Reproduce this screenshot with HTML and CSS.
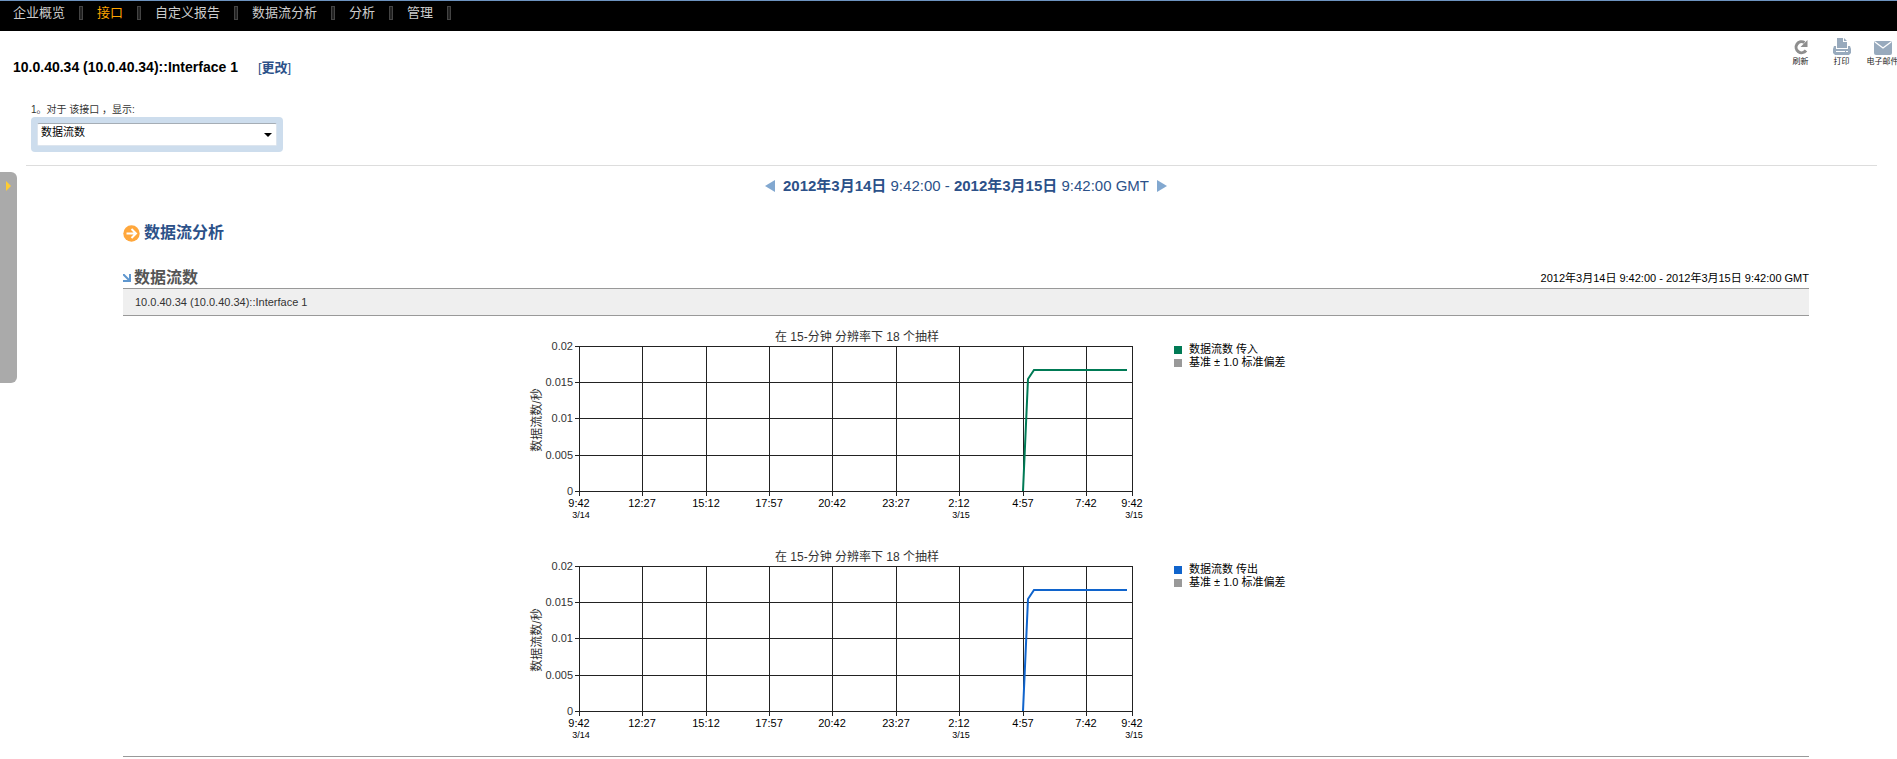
FILE: index.html
```html
<!DOCTYPE html>
<html lang="zh-CN">
<head>
    <meta charset="UTF-8">
    <meta name="viewport" content="width=device-width, initial-scale=1.0">
    <title>数据流分析</title>
    <link rel="stylesheet" href="styles.css">
</head>
<body>
    <nav class="menu">
        <a href="#">企业概览</a>
        <a href="#" class="active">接口</a>
        <a href="#">自定义报告</a>
        <a href="#">数据流分析</a>
        <a href="#">分析</a>
        <a href="#">管理</a>
    </nav>

    <header class="header">
        <div class="title">
            <h1>10.0.40.34 (10.0.40.34)::Interface 1</h1>
            <a href="#">[<b>更改</b>]</a>
        </div>
        <div class="tools">
            <button type="button">
                <svg width="18" height="18" viewBox="0 0 18 18">
                    <path d="M14 12.500A5.500 5.500 0 1 1 12.500 4.500" fill="none" stroke="#8e8e8e" stroke-width="3"/>
                    <path d="M15.500 2v7H8.500z" fill="#8e8e8e"/>
                </svg>
                <span>刷新</span>
            </button>
            <button type="button">
                <svg width="18" height="18" viewBox="0 0 18 18" fill="#98aabd">
                    <path d="M4 0h6v4h4v6H4z"/>
                    <path d="M11 0l3 3h-3z"/>
                    <path d="M1 8h2v3h12V8h2l1 3v4l-2 2H2l-2-2v-4z"/>
                    <path d="M3 13h9v1H3zM13 13h2v1h-2z" fill="#fff"/>
                </svg>
                <span>打印</span>
            </button>
            <button type="button">
                <svg width="18" height="18" viewBox="0 0 18 18">
                    <rect y="3" width="18" height="14" rx="2" fill="#98aabd"/>
                    <path d="M1 4l8 6 8-6" fill="none" stroke="#fff" stroke-width="1.300"/>
                </svg>
                <span>电子邮件</span>
            </button>
        </div>
    </header>

    <form class="filter">
        <label for="display">1。对于 该接口 ，显示:</label>
        <div class="select-box">
            <select id="display">
                <option>数据流数</option>
            </select>
        </div>
    </form>

    <button type="button" class="side-tab" aria-label="展开"></button>

    <main class="main">
        <div class="period">
            <button type="button" class="prev" aria-label="上一个"></button>
            <a href="#"><b>2012年3月14日</b> 9:42:00 - <b>2012年3月15日</b> 9:42:00 GMT</a>
            <button type="button" class="next" aria-label="下一个"></button>
        </div>

        <h2 class="section-title">
            <svg width="17" height="17" viewBox="0 0 17 17">
                <circle cx="8.500" cy="8.500" r="8.200" fill="#ffa73c"/>
                <path d="M3.500 8.500h9M8.500 4l4.500 4.500L8.500 13" fill="none" stroke="#fff" stroke-width="2"/>
            </svg>
            <a href="#">数据流分析</a>
        </h2>

        <section class="panel">
            <div class="panel-head">
                <h3>
                    <svg width="8" height="8" viewBox="0 0 8 8">
                        <path d="M0 0l6 6M7 0v7H0" fill="none" stroke="#5f97cf" stroke-width="2"/>
                    </svg>
                    数据流数
                </h3>
                <span>2012年3月14日 9:42:00 - 2012年3月15日 9:42:00 GMT</span>
            </div>
            <div class="panel-bar">10.0.40.34 (10.0.40.34)::Interface 1</div>

            <div class="charts">
                <div class="chart">
                    <svg class="plot" width="630" height="210" viewBox="0 0 630 210">
                        <text class="caption" x="337" y="15">在 15-分钟 分辨率下 18 个抽样</text>
                        <text class="caption" transform="translate(21 94) rotate(-90)">数据流数/秒</text>
                        <path id="grid" class="grid" d="M55 20.500H613M55 56.500H613M55 92.500H613M55 129.500H613M55 165.500H613M59.500 20V170M122.500 20V170M186.500 20V170M249.500 20V170M312.500 20V170M376.500 20V170M439.500 20V170M503.500 20V170M566.500 20V170M612.500 20V170"/>
                        <g class="y-labels">
                            <text x="53" y="24">0.02</text>
                            <text x="53" y="60">0.015</text>
                            <text x="53" y="96">0.01</text>
                            <text x="53" y="133">0.005</text>
                            <text x="53" y="169">0</text>
                        </g>
                        <g class="x-labels">
                            <text x="59" y="181">9:42</text>
                            <text x="122" y="181">12:27</text>
                            <text x="186" y="181">15:12</text>
                            <text x="249" y="181">17:57</text>
                            <text x="312" y="181">20:42</text>
                            <text x="376" y="181">23:27</text>
                            <text x="439" y="181">2:12</text>
                            <text x="503" y="181">4:57</text>
                            <text x="566" y="181">7:42</text>
                            <text x="612" y="181">9:42</text>
                        </g>
                        <g class="x-dates">
                            <text x="61" y="192">3/14</text>
                            <text x="441" y="192">3/15</text>
                            <text x="614" y="192">3/15</text>
                        </g>
                        <polyline class="line in" points="503,165 508,53 514,44 607,44"/>
                    </svg>
                    <ul class="legend">
                        <li><i class="key in"></i>数据流数 传入</li>
                        <li><i class="key"></i>基准 ± 1.0 标准偏差</li>
                    </ul>
                </div>

                <div class="chart">
                    <svg class="plot" width="630" height="210" viewBox="0 0 630 210">
                        <text class="caption" x="337" y="15">在 15-分钟 分辨率下 18 个抽样</text>
                        <text class="caption" transform="translate(21 94) rotate(-90)">数据流数/秒</text>
                        <use href="#grid"/>
                        <g class="y-labels">
                            <text x="53" y="24">0.02</text>
                            <text x="53" y="60">0.015</text>
                            <text x="53" y="96">0.01</text>
                            <text x="53" y="133">0.005</text>
                            <text x="53" y="169">0</text>
                        </g>
                        <g class="x-labels">
                            <text x="59" y="181">9:42</text>
                            <text x="122" y="181">12:27</text>
                            <text x="186" y="181">15:12</text>
                            <text x="249" y="181">17:57</text>
                            <text x="312" y="181">20:42</text>
                            <text x="376" y="181">23:27</text>
                            <text x="439" y="181">2:12</text>
                            <text x="503" y="181">4:57</text>
                            <text x="566" y="181">7:42</text>
                            <text x="612" y="181">9:42</text>
                        </g>
                        <g class="x-dates">
                            <text x="61" y="192">3/14</text>
                            <text x="441" y="192">3/15</text>
                            <text x="614" y="192">3/15</text>
                        </g>
                        <polyline class="line out" points="503,165 508,53 514,44 607,44"/>
                    </svg>
                    <ul class="legend">
                        <li><i class="key out"></i>数据流数 传出</li>
                        <li><i class="key"></i>基准 ± 1.0 标准偏差</li>
                    </ul>
                </div>
            </div>
        </section>
    </main>
</body>
</html>
```
FILE: styles.css
```css
*, *::before, *::after {
    box-sizing: border-box;
}

body {
    margin: 0;
    overflow-x: hidden;
    background: #fff;
    color: #000;
    font-family: "Liberation Sans", "Noto Sans CJK SC", sans-serif;
    font-size: 11px;
}

a {
    color: #2c5189;
    text-decoration: none;
}

button {
    padding: 0;
    border: none;
    background: none;
    font-family: inherit;
    cursor: pointer;
}

h1, h2, h3 {
    margin: 0;
}

/* menu */
.menu {
    display: flex;
    height: 31px;
    padding-left: 13px;
    border-top: 1px solid #6d93bf;
    background: #000;
}

.menu a {
    display: flex;
    margin-right: 14px;
    font-size: 13px;
    line-height: 24px;
    color: #ccc;
}

.menu a::after {
    content: "";
    width: 4px;
    height: 14px;
    margin: 5px 0 0 14px;
    border: 1px solid #444;
    background: #222;
}

.menu a.active {
    color: #ffa500;
}

/* header */
.header {
    display: flex;
    justify-content: space-between;
    height: 72px;
}

.title {
    display: flex;
    align-items: baseline;
    gap: 20px;
    padding: 26px 0 0 13px;
}

.title h1 {
    font-size: 14px;
    line-height: 20px;
}

.title a {
    font-size: 13px;
    line-height: 20px;
}

.tools {
    display: flex;
    margin-right: -6px;
    padding-top: 7px;
}

.tools button {
    display: flex;
    flex-direction: column;
    align-items: center;
    width: 41px;
}

.tools span {
    font-size: 8px;
    line-height: 12px;
    color: #222;
    white-space: nowrap;
}

/* filter */
.filter {
    margin: 0 20px 0 26px;
    padding: 0 0 13px 5px;
    border-bottom: 1px solid #ddd;
}

.filter label {
    display: block;
    font-size: 10px;
    line-height: 14px;
    color: #333;
}

.select-box {
    position: relative;
    width: 252px;
    padding: 6px;
    border-radius: 4px;
    background: #cddded;
}

.select-box select {
    display: block;
    width: 100%;
    height: 23px;
    padding: 0 3px 6px;
    border: 1px solid #dde5ee;
    border-top-color: #a5adb5;
    border-radius: 2px;
    background: #fff;
    color: #000;
    font-family: inherit;
    font-size: 11px;
    appearance: none;
}

.select-box::after {
    content: "";
    position: absolute;
    top: 16px;
    right: 11px;
    border: 4px solid transparent;
    border-top-color: #000;
    border-bottom: none;
    pointer-events: none;
}

/* collapsed side panel, lies over the page */
.side-tab {
    position: absolute;
    top: 172px;
    left: 0;
    width: 17px;
    height: 211px;
    border-radius: 0 6px 6px 0;
    background: #aaa;
}

.side-tab::before {
    content: "";
    position: absolute;
    top: 9px;
    left: 6px;
    border: 5px solid transparent;
    border-left-color: #fc3;
    border-right: none;
}

/* main */
.main {
    padding: 9px 88px 0 123px;
}

.period {
    display: flex;
    justify-content: center;
    align-items: center;
    gap: 8px;
    font-size: 15px;
    line-height: 22px;
}

.prev, .next {
    border: 6px solid transparent;
}

.prev {
    border-right: 10px solid #82a8d0;
    border-left: none;
}

.next {
    border-left: 10px solid #82a8d0;
    border-right: none;
}

.section-title {
    display: flex;
    align-items: center;
    gap: 4px;
    margin-top: 24px;
    font-size: 16px;
    line-height: 24px;
}

.panel {
    margin-top: 20px;
    border-bottom: 1px solid #999;
}

.panel-head {
    display: flex;
    justify-content: space-between;
    align-items: center;
    height: 23px;
}

.panel-head h3 {
    display: flex;
    align-items: center;
    gap: 3px;
    padding-top: 2px;
    font-size: 16px;
    line-height: 22px;
    color: #555;
}

.panel-bar {
    padding: 0 12px;
    border-top: 1px solid #999;
    border-bottom: 1px solid #999;
    background: #efefef;
    line-height: 26px;
    color: #333;
}

.charts {
    display: flex;
    flex-direction: column;
    gap: 10px;
    padding-top: 10px;
}

.chart {
    display: flex;
    justify-content: center;
    gap: 24px;
}

.plot {
    flex: none;
    font-size: 11px;
}

.caption {
    font-size: 12px;
    fill: #333;
    text-anchor: middle;
}

.grid {
    fill: none;
    stroke: #222;
}

.y-labels {
    fill: #333;
    text-anchor: end;
}

.x-labels {
    text-anchor: middle;
}

.x-dates {
    font-size: 9px;
    text-anchor: middle;
}

.line {
    fill: none;
    stroke-width: 2;
}

.line.in {
    stroke: #007a55;
}

.line.out {
    stroke: #1064cc;
}

.legend {
    width: 238px;
    margin: 0;
    padding: 17px 0 0;
    list-style: none;
}

.legend li {
    display: flex;
    align-items: center;
    gap: 7px;
    height: 13px;
    line-height: 13px;
}

.key {
    width: 8px;
    height: 8px;
    background: #999;
}

.key.in {
    background: #007a55;
}

.key.out {
    background: #1064cc;
}
```
